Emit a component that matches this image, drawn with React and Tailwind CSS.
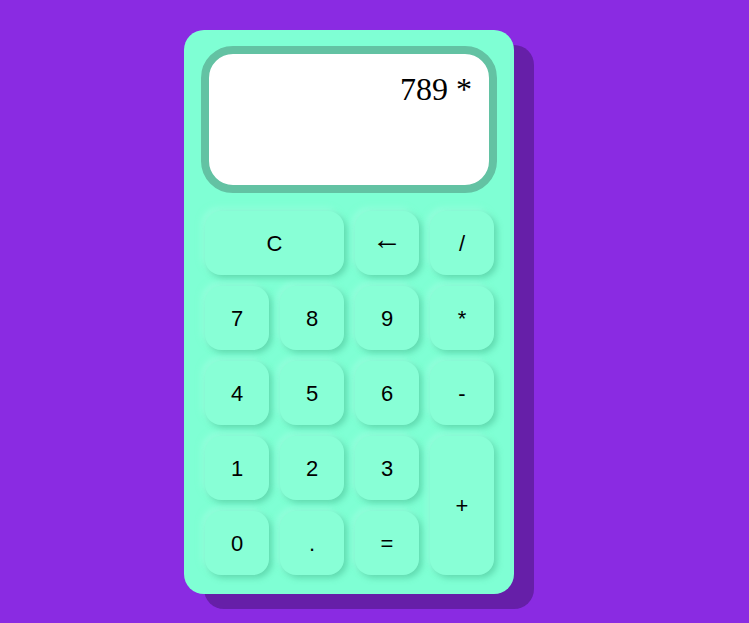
import React from 'react';

const keys = [
  { label: 'C', className: 'col-span-2' },
  { label: '←', className: 'text-[30px] leading-none pb-[8px]' },
  { label: '/' },
  { label: '7' }, { label: '8' }, { label: '9' }, { label: '*' },
  { label: '4' }, { label: '5' }, { label: '6' }, { label: '-' },
  { label: '1' }, { label: '2' }, { label: '3' },
  { label: '+', className: 'row-span-2' },
  { label: '0' }, { label: '.' }, { label: '=' },
];

export default function App() {
  return (
    <div className="min-h-screen w-full bg-[#8a2be2] pt-[30px] pl-[184px]">
      <div className="w-[330px] h-[564px] rounded-[20px] bg-[#7fffd4] shadow-[20px_15px_0_#661fa8] px-[17px] pt-[16px]">
        {/* display */}
        <div className="h-[147px] rounded-[32px] border-[8px] border-[#63c2a3] bg-white pr-[17px] pt-[16px] text-right font-['Liberation_Serif',serif] text-[32px] leading-[38px] text-black">
          789 *
        </div>

        {/* keypad */}
        <div className="mt-[18px] px-[4px] grid grid-cols-[repeat(4,64px)] auto-rows-[64px] gap-[11px] font-['Liberation_Sans',Arial,sans-serif] text-[22px] text-black">
          {keys.map((k, i) => (
            <button
              key={i}
              className={
                'flex items-center justify-center rounded-[16px] bg-[#88ffd6] shadow-[3px_3px_6px_rgba(60,170,130,0.45),-3px_-3px_6px_rgba(170,255,230,0.5)] ' +
                (k.className || '')
              }
            >
              {k.label}
            </button>
          ))}
        </div>
      </div>
    </div>
  );
}
